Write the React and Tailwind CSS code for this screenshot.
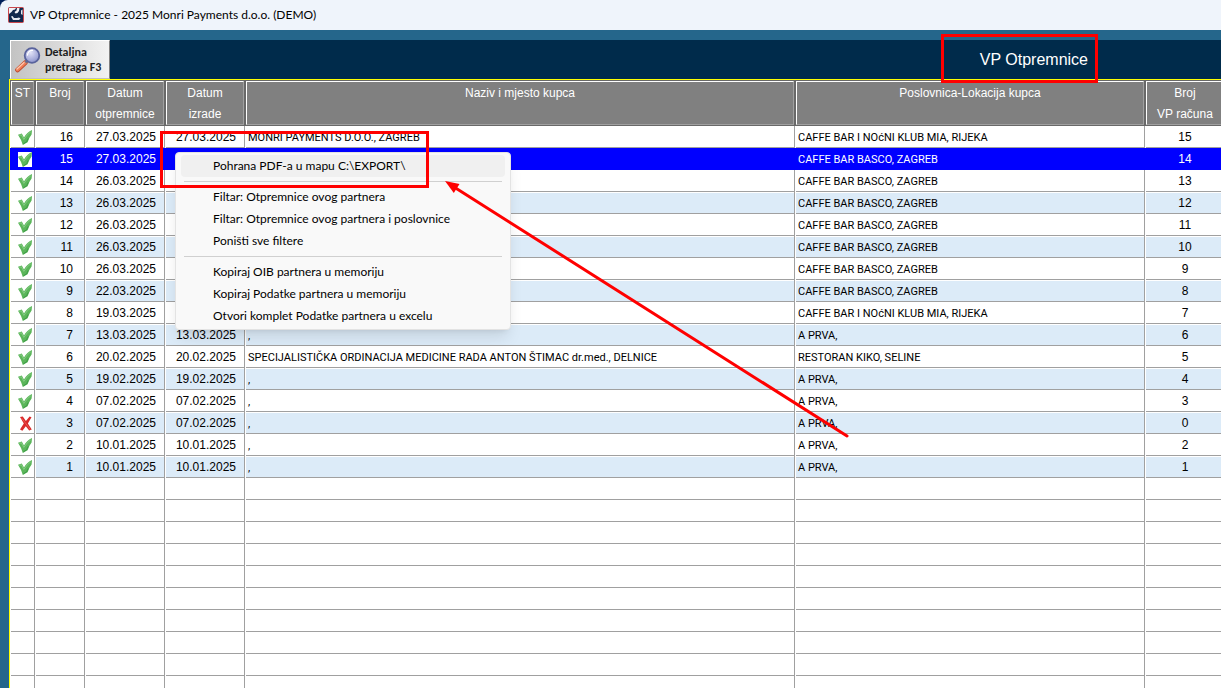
import { useState } from "react";

const invoices = [
    { no: 16, shipped: "27.03.2025", created: "27.03.2025", buyer: "MONRI PAYMENTS D.O.O., ZAGREB", branch: "CAFFE BAR I NOćNI KLUB MIA, RIJEKA", bill: 15 },
    { no: 15, shipped: "27.03.2025", created: "", buyer: "", branch: "CAFFE BAR BASCO, ZAGREB", bill: 14 },
    { no: 14, shipped: "26.03.2025", created: "", buyer: "", branch: "CAFFE BAR BASCO, ZAGREB", bill: 13 },
    { no: 13, shipped: "26.03.2025", created: "", buyer: "", branch: "CAFFE BAR BASCO, ZAGREB", bill: 12 },
    { no: 12, shipped: "26.03.2025", created: "", buyer: "", branch: "CAFFE BAR BASCO, ZAGREB", bill: 11 },
    { no: 11, shipped: "26.03.2025", created: "", buyer: "", branch: "CAFFE BAR BASCO, ZAGREB", bill: 10 },
    { no: 10, shipped: "26.03.2025", created: "", buyer: "", branch: "CAFFE BAR BASCO, ZAGREB", bill: 9 },
    { no: 9, shipped: "22.03.2025", created: "", buyer: "", branch: "CAFFE BAR BASCO, ZAGREB", bill: 8 },
    { no: 8, shipped: "19.03.2025", created: "", buyer: "", branch: "CAFFE BAR I NOćNI KLUB MIA, RIJEKA", bill: 7 },
    { no: 7, shipped: "13.03.2025", created: "13.03.2025", buyer: ",", branch: "A PRVA,", bill: 6 },
    { no: 6, shipped: "20.02.2025", created: "20.02.2025", buyer: "SPECIJALISTIČKA ORDINACIJA MEDICINE RADA ANTON ŠTIMAC dr.med., DELNICE", branch: "RESTORAN KIKO, SELINE", bill: 5 },
    { no: 5, shipped: "19.02.2025", created: "19.02.2025", buyer: ",", branch: "A PRVA,", bill: 4 },
    { no: 4, shipped: "07.02.2025", created: "07.02.2025", buyer: ",", branch: "A PRVA,", bill: 3 },
    { no: 3, shipped: "07.02.2025", created: "07.02.2025", buyer: ",", branch: "A PRVA,", bill: 0, cancelled: true },
    { no: 2, shipped: "10.01.2025", created: "10.01.2025", buyer: ",", branch: "A PRVA,", bill: 2 },
    { no: 1, shipped: "10.01.2025", created: "10.01.2025", buyer: ",", branch: "A PRVA,", bill: 1 },
];

const emptyRows = Array.from({ length: 10 }, (_, i) => i);

const columns = [
    ["ST"],
    ["Broj"],
    ["Datum", "otpremnice"],
    ["Datum", "izrade"],
    ["Naziv i mjesto kupca"],
    ["Poslovnica-Lokacija kupca"],
    ["Broj", "VP računa"],
];

const menuGroups = [
    ["Pohrana PDF-a u mapu C:\\EXPORT\\"],
    [
        "Filtar: Otpremnice ovog partnera",
        "Filtar: Otpremnice ovog partnera i poslovnice",
        "Poništi sve filtere",
    ],
    [
        "Kopiraj OIB partnera u memoriju",
        "Kopiraj Podatke partnera u memoriju",
        "Otvori komplet Podatke partnera u excelu",
    ],
];

const AppLogo = () => (
    <svg width="16" height="16" viewBox="0 0 16 16" aria-hidden="true">
        <rect x="0.5" y="0.5" width="15" height="15" rx="1" fill="#12294d" stroke="#c9474c" />
        <path d="M1 1h7L7 2.500 5 3 3.500 5 1 7z" fill="#f4f3f7" />
        <path d="M9 1h2.500L11 4 9.500 6 7.500 6.500 6.500 5 8.500 3.500z" fill="#f4f3f7" />
        <path d="M13 3.500 14.500 2.500V8L13 7z" fill="#e6e9f0" />
        <path d="M3 9.500 4.500 9 6 11 9 11 11 10.500 12.500 11.500 11 13 5 13z" fill="#e6e9f0" />
    </svg>
);

const Magnifier = () => (
    <svg className="shrink-0" width="28" height="28" viewBox="0 0 28 28" aria-hidden="true">
        <defs>
            <radialGradient id="lens" cx="0.4" cy="0.3" r="0.8">
                <stop offset="0" stopColor="#e2e3f8" />
                <stop offset="0.6" stopColor="#a9aedb" />
                <stop offset="1" stopColor="#8289c4" />
            </radialGradient>
        </defs>
        <path d="M2.500 24 10.500 16.500" stroke="#b5452a" strokeWidth="4.600" strokeLinecap="round" />
        <path d="M2.500 23.800 10.500 16.300" stroke="#f07c55" strokeWidth="3.400" strokeLinecap="round" />
        <path d="M2 23 9 16.500" stroke="#fbc9af" strokeWidth="1.200" strokeLinecap="round" />
        <path d="M10.500 16.500 12.500 14.500" stroke="#6b7186" strokeWidth="2.600" />
        <circle cx="17" cy="9.500" r="7.300" fill="url(#lens)" stroke="#59639c" strokeWidth="1.800" />
        <path d="M12.500 9a5 5 0 0 1 5-4.600" stroke="#fff" strokeWidth="1.300" fill="none" strokeLinecap="round" />
    </svg>
);

const StatusIcon = ({ cancelled }) => (
    <svg
        width="14"
        height="15"
        viewBox="0 0 14 15"
        role="img"
        aria-label={cancelled ? "Stornirano" : "Potvrđeno"}>
        <rect width="14" height="15" fill="#fff" />
        {cancelled ? (
            <>
                <path d="M2 1 4.800 0.600 7.900 5 11.600 0.400 13.500 1.200 9.900 7.400 13.800 13.400 11.200 14.600 7.800 10.200 4.400 14.800 2 13.600 5.800 7.600z" fill="#d92a2a" />
                <path d="M3.600 2 8 7.800 12.200 13.400" stroke="#ee5a55" strokeWidth="0.900" fill="none" />
            </>
        ) : (
            <>
                <path d="M0 4.800 3.800 3.600 6 7.400Q9 2.200 14 0L13.600 4.400Q10.800 8 9.600 12.200L4.800 15Q3.200 9.400 0 4.800z" fill="#5bb65a" />
                <path d="M1.400 5.400 3.400 4.800 5.800 9.400Q9.400 4 12.800 1.800" stroke="#86cc84" strokeWidth="1" fill="none" />
                <path d="M5.400 13.800 8.600 11.800 10.200 8.400" stroke="#3d9a47" strokeWidth="1" fill="none" />
            </>
        )}
    </svg>
);

const Cell = ({ children, selected, shaded, className = "" }) => (
    <td
        className={`border-r p-0 pt-px pl-px ${
            selected ? "border-[#0000ff] bg-[#0000ff]" : "border-[#a0a0a0]"
        }`}>
        <div
            className={`flex h-[21px] items-center overflow-hidden whitespace-nowrap border-b ${
                selected ? "border-[#0000ff]" : "border-[#a0a0a0]"
            } ${shaded ? "bg-[#dcebf8]" : ""} ${className}`}>
            {children}
        </div>
    </td>
);

const ContextMenu = () => (
    <div
        role="menu"
        className="absolute top-[152px] left-[175px] w-[336px] rounded border border-[#e3e3e3] bg-[#f9f9f9] px-[5px] py-[2px] font-[Lato,sans-serif] text-xs text-black shadow-lg">
        {menuGroups.map((group, index) => (
            <div key={index}>
                {index > 0 && <hr className="mx-[3px] my-1 border-[#d0d0d0]" />}
                {group.map((label) => (
                    <button
                        key={label}
                        role="menuitem"
                        className={`flex h-[22px] w-full items-center rounded pl-8 text-left ${
                            index === 0 ? "bg-[#f0f0f0]" : ""
                        }`}>
                        {label}
                    </button>
                ))}
            </div>
        ))}
    </div>
);

// Red frames and arrow drawn over the window
const Annotations = () => (
    <div className="pointer-events-none absolute inset-0">
        <div className="absolute top-[34px] left-[941px] h-[49px] w-[157px] border-3 border-[#ff0000]"></div>
        <div className="absolute top-[131px] left-[160px] h-[57px] w-[269px] border-3 border-[#ff0000]"></div>
        <svg className="absolute top-[176px] left-[440px]" width="412" height="266" viewBox="0 0 412 266" aria-hidden="true">
            <path d="M14 11 407 260" stroke="#ff0000" strokeWidth="3" strokeLinecap="round" />
            <path d="M5 5 19.500 8 13.800 17z" fill="#ff0000" />
        </svg>
    </div>
);

const App = () => {
    const [selectedNo, setSelectedNo] = useState(15);

    return (
        <div className="relative flex h-screen flex-col overflow-hidden bg-[#00205a] font-['Liberation_Sans',sans-serif] text-xs">
            <header className="flex h-[30px] shrink-0 items-center gap-[6px] rounded-tl-lg bg-[#eff4fb] pl-2 font-[Lato,sans-serif] text-black">
                <AppLogo />
                <h1>VP Otpremnice - 2025 Monri Payments d.o.o. (DEMO)</h1>
            </header>

            <main className="flex min-h-0 flex-1 flex-col bg-[#25668b] pt-[10px] pl-[9px]">
                <div className="ml-px flex h-[39px] shrink-0 items-center justify-between bg-[#002b4b] pr-[133px]">
                    <button className="flex h-full w-[100px] items-center gap-[2px] border border-t-white border-r-[#808080] border-b-[#c0c0c0] border-l-white bg-linear-to-r from-[#c3c3c3] to-[#f2f2f2] pl-1 text-left font-[Carlito,Lato,sans-serif] text-xs leading-[15px] font-bold text-[#1e1e1e]">
                        <Magnifier />
                        <span className="whitespace-nowrap">
                            Detaljna
                            <br />
                            pretraga F3
                        </span>
                    </button>
                    <h2 className="text-base text-white">VP Otpremnice</h2>
                </div>

                <div className="flex-1 overflow-hidden border-t border-l border-[#ffff00] bg-white">
                    <table className="w-full min-w-[1215px] table-fixed border-separate border-spacing-0 text-black">
                        <colgroup>
                            <col className="w-[25px]" />
                            <col className="w-[50px]" />
                            <col className="w-[80px]" />
                            <col className="w-[80px]" />
                            <col />
                            <col className="w-[350px]" />
                            <col className="w-[80px]" />
                        </colgroup>
                        <thead>
                            <tr>
                                {columns.map((lines, index) => (
                                    <th
                                        key={index}
                                        className="border border-[#696969] bg-[#808080] p-0 font-normal text-white">
                                        <div className="h-[44px] border border-t-white border-r-[#a0a0a0] border-b-[#a0a0a0] border-l-white pt-px leading-[21px]">
                                            {lines.map((line) => (
                                                <div key={line}>{line}</div>
                                            ))}
                                        </div>
                                    </th>
                                ))}
                            </tr>
                        </thead>
                        <tbody>
                            {invoices.map((row) => {
                                const selected = row.no === selectedNo;
                                const shaded = !selected && row.no % 2 === 1;
                                return (
                                    <tr
                                        key={row.no}
                                        className={selected ? "text-white" : ""}
                                        onClick={() => setSelectedNo(row.no)}>
                                        <Cell selected={selected} className="pl-[7px]">
                                            <StatusIcon cancelled={row.cancelled} />
                                        </Cell>
                                        <Cell selected={selected} shaded={shaded} className="justify-end pr-[11px]">
                                            {row.no}
                                        </Cell>
                                        <Cell selected={selected} shaded={shaded} className="justify-end pr-2">
                                            {row.shipped}
                                        </Cell>
                                        <Cell selected={selected} shaded={shaded} className="justify-end pr-2">
                                            {row.created}
                                        </Cell>
                                        <Cell selected={selected} shaded={shaded} className="pt-[2px] pl-[2px] font-[Roboto,sans-serif] text-[11px]">
                                            {row.buyer}
                                        </Cell>
                                        <Cell selected={selected} shaded={shaded} className="pt-[2px] pl-[2px] font-[Roboto,sans-serif] text-[11px]">
                                            {row.branch}
                                        </Cell>
                                        <Cell selected={selected} shaded={shaded} className="justify-center">
                                            {row.bill}
                                        </Cell>
                                    </tr>
                                );
                            })}
                            {emptyRows.map((row) => (
                                <tr key={row}>
                                    {columns.map((_, index) => (
                                        <Cell key={index} />
                                    ))}
                                </tr>
                            ))}
                        </tbody>
                    </table>
                </div>
            </main>

            <ContextMenu />
            <Annotations />
        </div>
    );
};

export default App;
